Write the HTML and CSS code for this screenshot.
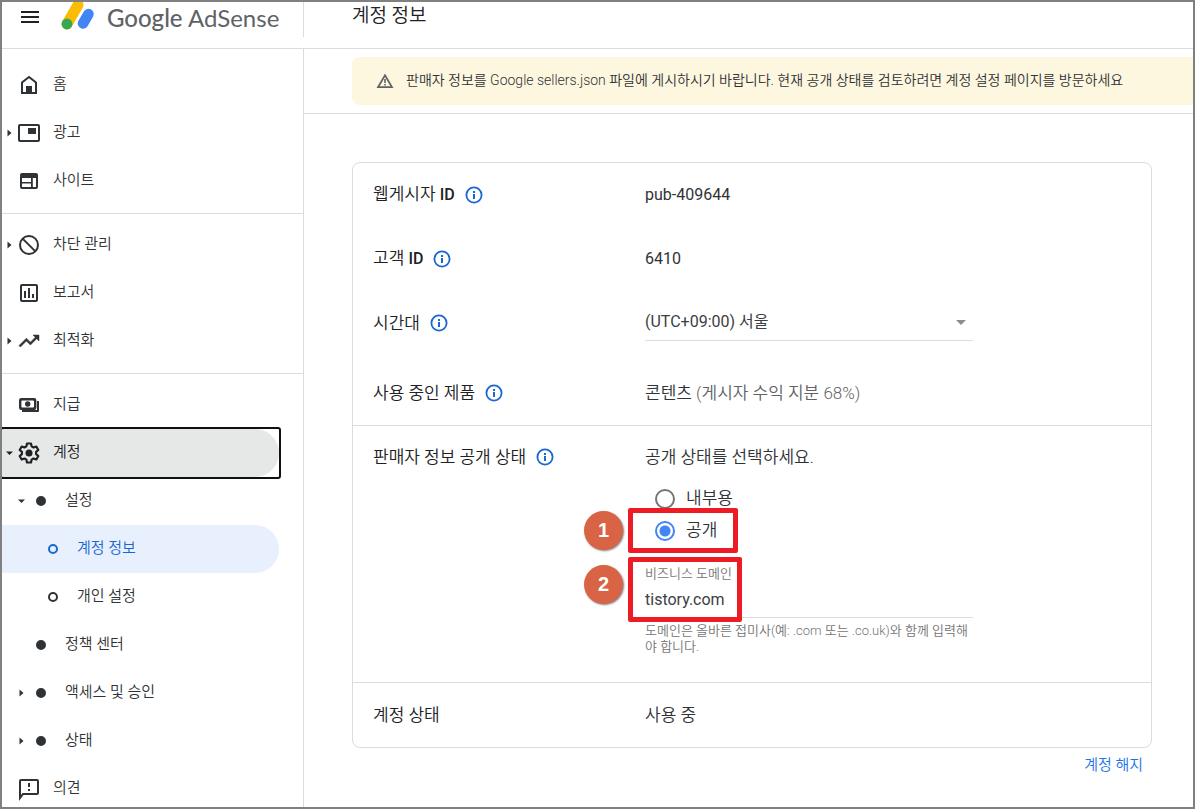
FILE: index.html
```html
<!DOCTYPE html>
<html lang="ko">
<head>
<meta charset="utf-8">
<meta name="viewport" content="width=device-width, initial-scale=1">
<title>Google AdSense - 계정 정보</title>
<link rel="stylesheet" href="styles.css">
</head>
<body>
<svg class="defs" aria-hidden="true">
  <symbol id="info" viewBox="0 0 18 18">
    <circle cx="9" cy="9" r="7.6" fill="none" stroke="currentColor" stroke-width="1.8"/>
    <path d="M8 8h2v5H8zM8 5h2v2H8z" fill="currentColor"/>
  </symbol>
  <symbol id="right" viewBox="0 0 8 8"><path d="M2 .5v7L6 4z" fill="currentColor"/></symbol>
  <symbol id="down" viewBox="0 0 8 8"><path d="M.5 2.5h7L4 6z" fill="currentColor"/></symbol>
</svg>
<div class="shell">
  <header class="topbar">
    <div class="brand">
      <button class="menu" type="button" aria-label="기본 메뉴">
        <svg width="24" height="24" viewBox="0 0 24 24"><path d="M3 6h18v2H3zM3 11h18v2H3zM3 16h18v2H3z" fill="#202124"/></svg>
      </button>
      <a class="logo" href="#">
        <svg class="mark" width="36" height="30" viewBox="0 0 36 30">
          <path d="M19 3L8 22" stroke="#fbbc04" stroke-width="11" stroke-linecap="round"/>
          <path d="M29.500 12L24 21.500" stroke="#4285f4" stroke-width="10.500" stroke-linecap="round"/>
          <circle cx="8" cy="22" r="5.400" fill="#34a853"/>
        </svg>
        <span class="wordmark"><span class="google">Google</span> AdSense</span>
      </a>
    </div>
    <h1 class="title">계정 정보</h1>
  </header>

  <div class="body">
    <nav class="sidebar" aria-label="탐색">
      <div class="group">
        <a class="item" href="#"><span class="caret"></span>
          <svg class="icon" viewBox="0 0 24 24"><path d="M5 20V9.500L12 4l7 5.500V20z" fill="none" stroke="currentColor" stroke-width="2"/><path d="M9 13h6v7H9z" fill="currentColor"/></svg><span>홈</span></a>
        <a class="item" href="#"><svg class="caret"><use href="#right"/></svg>
          <svg class="icon" viewBox="0 0 24 24"><rect x="2" y="4" width="20" height="16" rx="1" fill="none" stroke="currentColor" stroke-width="2"/><path d="M11 7h8v6h-8z" fill="currentColor"/></svg><span>광고</span></a>
        <a class="item" href="#"><span class="caret"></span>
          <svg class="icon" viewBox="0 0 24 24"><rect x="4" y="5" width="16" height="14" rx="1" fill="none" stroke="currentColor" stroke-width="2"/><path d="M4 5h16v4H4zM4 13h10v1.500H4zM14 9h1.800v10H14z" fill="currentColor"/></svg><span>사이트</span></a>
      </div>
      <div class="group">
        <a class="item" href="#"><svg class="caret"><use href="#right"/></svg>
          <svg class="icon" viewBox="0 0 24 24" fill="none" stroke="currentColor" stroke-width="2"><circle cx="12" cy="12" r="9"/><path d="M5.600 5.600l12.800 12.800"/></svg><span>차단 관리</span></a>
        <a class="item" href="#"><span class="caret"></span>
          <svg class="icon" viewBox="0 0 24 24"><rect x="4" y="4" width="16" height="16" rx="1" fill="none" stroke="currentColor" stroke-width="2"/><path d="M7 10h2v7H7zM11 7h2v10h-2zM15 13h2v4h-2z" fill="currentColor"/></svg><span>보고서</span></a>
        <a class="item" href="#"><svg class="caret"><use href="#right"/></svg>
          <svg class="icon" viewBox="0 0 24 24"><path d="M16 6l2.290 2.290-4.880 4.880-4-4L2 16.590 3.410 18l6-6 4 4 6.300-6.290L22 12V6z" fill="currentColor" stroke="currentColor" stroke-width=".5"/></svg><span>최적화</span></a>
      </div>
      <div class="group">
        <a class="item" href="#"><span class="caret"></span>
          <svg class="icon" viewBox="0 0 24 24"><rect x="3.200" y="6.200" width="15" height="9.600" rx="1" fill="none" stroke="currentColor" stroke-width="2.400"/><circle cx="10.700" cy="11" r="2.700" fill="currentColor"/><path d="M3 9l3-3H3zM18 9l-3-3h3zM3 13l3 3H3zM18 13l-3 3h3z" fill="currentColor"/><path d="M21 8v10H5" fill="none" stroke="currentColor" stroke-width="2" stroke-linejoin="round"/></svg><span>지급</span></a>
        <a class="item focused" href="#"><svg class="caret"><use href="#down"/></svg>
          <svg class="icon" viewBox="0 0 24 24"><path d="M10 3h4l.6 2.900 1.900 1.100 2.800-1 2 3.500-2.200 1.900v2.200l2.200 1.900-2 3.500-2.800-1-1.900 1.100L14 22h-4l-.6-2.900L7.500 18l-2.800 1-2-3.500 2.200-1.900v-2.200L2.700 9.500l2-3.500 2.800 1 1.900-1.100z" transform="translate(0 -.5)" fill="none" stroke="currentColor" stroke-width="2.200" stroke-linejoin="round"/><circle cx="12" cy="12" r="3.500" fill="currentColor"/></svg><span>계정</span></a>
        <a class="item sub" href="#"><svg class="caret"><use href="#down"/></svg><span class="dot"></span><span>설정</span></a>
        <a class="item leaf selected" href="#" aria-current="page"><span class="caret"></span><span class="dot ring"></span><span>계정 정보</span></a>
        <a class="item leaf" href="#"><span class="caret"></span><span class="dot ring"></span><span>개인 설정</span></a>
        <a class="item sub" href="#"><span class="caret"></span><span class="dot"></span><span>정책 센터</span></a>
        <a class="item sub" href="#"><svg class="caret"><use href="#right"/></svg><span class="dot"></span><span>액세스 및 승인</span></a>
        <a class="item sub" href="#"><svg class="caret"><use href="#right"/></svg><span class="dot"></span><span>상태</span></a>
        <a class="item" href="#"><span class="caret"></span>
          <svg class="icon" viewBox="0 0 24 24"><path d="M3 21V4q0-1 1-1h16q1 0 1 1v12q0 1-1 1H6z" fill="none" stroke="currentColor" stroke-width="2"/><path d="M11 6h2v4h-2zM11 12h2v2h-2z" fill="currentColor"/></svg><span>의견</span></a>
      </div>
    </nav>

    <main class="main">
      <div class="notice">
        <div class="banner" role="status">
          <svg width="18" height="18" viewBox="0 0 18 18"><path d="M9 3.200L16 15.200H2z" fill="none" stroke="#5f6368" stroke-width="1.700"/><path d="M8.200 7h1.600v4H8.200zM8.200 12h1.600v1.600H8.200z" fill="#5f6368"/></svg>
          <span>판매자 정보를 Google sellers.json 파일에 게시하시기 바랍니다. 현재 공개 상태를 검토하려면 계정 설정 페이지를 방문하세요</span>
        </div>
      </div>

      <div class="content">
        <div class="card">
          <section class="section">
            <div class="row">
              <div class="name"><span>웹게시자 <span class="latin">ID</span></span><button class="info" type="button" aria-label="웹게시자 ID 도움말"><svg><use href="#info"/></svg></button></div>
              <div class="latin">pub-409644</div>
            </div>
            <div class="row">
              <div class="name"><span>고객 <span class="latin">ID</span></span><button class="info" type="button" aria-label="고객 ID 도움말"><svg><use href="#info"/></svg></button></div>
              <div class="latin">6410</div>
            </div>
            <div class="row tall">
              <div class="name"><label for="tz">시간대</label><button class="info" type="button" aria-label="시간대 도움말"><svg><use href="#info"/></svg></button></div>
              <div class="select">
                <select id="tz"><option>(UTC+09:00) 서울</option></select>
                <svg class="arrow" width="10" height="5" viewBox="0 0 10 5"><path d="M0 0h10L5 5z" fill="#8a8d91"/></svg>
              </div>
            </div>
            <div class="row">
              <div class="name">사용 중인 제품<button class="info" type="button" aria-label="사용 중인 제품 도움말"><svg><use href="#info"/></svg></button></div>
              <div>콘텐츠 <span class="muted">(게시자 수익 지분 68%)</span></div>
            </div>
          </section>

          <section class="section">
            <div class="row disclosure">
              <div class="name">판매자 정보 공개 상태<button class="info" type="button" aria-label="판매자 정보 공개 상태 도움말"><svg><use href="#info"/></svg></button></div>
              <div class="field">
                <div class="prompt" id="prompt">공개 상태를 선택하세요.</div>
                <div class="radios" role="radiogroup" aria-labelledby="prompt">
                  <label class="radio"><input type="radio" name="visibility"><span>내부용</span></label>
                  <label class="radio"><input type="radio" name="visibility" checked><span>공개</span></label>
                </div>
                <div class="domain">
                  <label for="domain">비즈니스 도메인</label>
                  <input id="domain" type="text" value="tistory.com" aria-describedby="hint">
                  <p class="hint" id="hint">도메인은 올바른 접미사(예: .com 또는 .co.uk)와 함께 입력해야 합니다.</p>
                </div>
                <div class="mark-box first"></div>
                <div class="mark-box second"></div>
                <div class="step one">1</div>
                <div class="step two">2</div>
              </div>
            </div>
          </section>

          <section class="section">
            <div class="row">
              <div class="name">계정 상태</div>
              <div>사용 중</div>
            </div>
          </section>
        </div>
        <div class="actions"><a href="#">계정 해지</a></div>
      </div>
    </main>
  </div>
</div>
</body>
</html>
```
FILE: styles.css
```css
* { box-sizing: border-box; }

body {
  margin: 0;
  background: #fff;
  color: #303336;
  font: 350 17px/24px Roboto, "Noto Sans CJK KR", sans-serif;
}

.defs { display: none; }

button {
  padding: 0;
  border: 0;
  background: none;
  cursor: pointer;
}

a { color: inherit; text-decoration: none; }

.shell {
  display: flex;
  flex-direction: column;
  height: 100vh;
  border: 2px solid #808080;
  overflow: hidden;
}

/* Top bar */
.topbar {
  display: flex;
  align-items: flex-start;
  flex: none;
  height: 47px;
  border-bottom: 1px solid #dadce0;
}

.brand {
  display: flex;
  align-items: flex-start;
  width: 302px;
  height: 35px;
  padding-left: 16px;
  border-right: 1px solid #dadce0;
}

.menu { height: 24px; margin: 3px 17px 0 0; }

.menu svg, .mark { display: block; }

.logo { display: flex; color: #5f6368; }

.wordmark {
  margin-left: 12px;
  font: 400 24px/32px Lato, sans-serif;
  white-space: nowrap;
}

.google { font-weight: 500; }

.title {
  margin: 0 0 0 48px;
  color: #202124;
  font-size: 19px;
  font-weight: 350;
  line-height: 28px;
}

.body { display: flex; flex: 1; min-height: 0; }

/* Sidebar */
.sidebar {
  flex: none;
  width: 302px;
  border-right: 1px solid #dadce0;
  overflow: hidden;
}

.group { padding: 7px 24px 8px 0; border-top: 1px solid #dadce0; }

.group:first-child { padding-top: 12px; border-top: 0; }

.item {
  display: flex;
  align-items: center;
  height: 48px;
  border-radius: 0 24px 24px 0;
  font-size: 15px;
}

.item > :last-child { margin: 0 0 3px 12px; }

.sub { padding-left: 12px; }

.leaf { padding-left: 24px; }

.caret { width: 15px; height: 8px; flex: none; }

.icon { width: 24px; height: 24px; flex: none; }

.dot {
  flex: none;
  width: 10px;
  height: 10px;
  margin: 0 7px;
  border: 2px solid currentColor;
  border-radius: 50%;
  background: currentColor;
}

.ring { background: none; }

.focused {
  position: relative;
  background: #e6e8e7;
  color: #202124;
}

.focused::after {
  content: "";
  position: absolute;
  inset: -2px;
  border: 2px solid #101010;
  border-radius: 3px;
}

.selected { background: #e8f0fe; color: #1967d2; }

/* Main */
.main { flex: 1; min-width: 0; overflow: hidden; }

.notice { padding: 8px 0 8px 48px; border-bottom: 1px solid #dadce0; }

.banner {
  display: flex;
  align-items: center;
  gap: 12px;
  min-height: 48px;
  padding-left: 24px;
  border-radius: 8px 0 0 8px;
  background: #fef7e0;
  font-size: 14px;
  line-height: 20px;
}

.banner span { margin-bottom: 3px; }

.content { max-width: 848px; padding: 48px 0 0 48px; }

.card { border: 1px solid #dadce0; border-radius: 8px; }

.section + .section { border-top: 1px solid #dadce0; }

.row {
  display: grid;
  grid-template-columns: 272px 328px;
  align-items: center;
  min-height: 64px;
  padding: 0 0 1px 20px;
}

.tall { padding-bottom: 7px; min-height: 70px; }

.name {
  display: flex;
  align-items: center;
  gap: 10px;
  color: #202124;
}

.latin { font-size: 16px; font-weight: 400; }

.name .latin { font-weight: 500; }

.muted { color: #5f6368; }

.info { width: 18px; height: 18px; color: #1967d2; }

.info svg { display: block; width: 18px; height: 18px; }

.select { position: relative; }

.select select {
  display: block;
  width: 100%;
  height: 37px;
  padding: 0;
  border: 0;
  border-bottom: 1px solid #dadce0;
  border-radius: 0;
  appearance: none;
  background: none;
  color: #3c4043;
  font: 400 16px/24px Roboto, "Noto Sans CJK KR", sans-serif;
}

.arrow { position: absolute; right: 7px; top: 16px; pointer-events: none; }

.disclosure { align-items: start; padding-top: 19px; padding-bottom: 27px; }

.field { position: relative; }

.prompt { padding-bottom: 14px; }

.radios { padding-left: 10px; }

.radio { display: flex; align-items: center; gap: 11px; height: 32px; }

.radio span { margin-bottom: 2px; }

.radio input {
  width: 20px;
  height: 20px;
  margin: 0;
  border: 2px solid #757575;
  border-radius: 50%;
  appearance: none;
}

.radio input:checked {
  border-color: #4285f4;
  background: radial-gradient(circle, #4285f4 5px, transparent 6px);
}

.domain { padding-top: 17px; }

.domain label {
  display: block;
  color: #757575;
  font-size: 13px;
  line-height: 20px;
}

.domain input {
  display: block;
  width: 100%;
  height: 34px;
  padding: 0 0 3px;
  border: 0;
  border-bottom: 1px solid #dadce0;
  background: none;
  color: #3c4043;
  font: 400 16px/24px Roboto, sans-serif;
}

.hint {
  margin: 5px 0 0;
  color: #757575;
  font-size: 13px;
  line-height: 16px;
}

/* Tutorial callouts over the form */
.mark-box {
  position: absolute;
  left: -17px;
  border: 5px solid #ed1c24;
  border-radius: 2px;
  pointer-events: none;
}

.first { top: 63px; width: 110px; height: 45px; }

.second { top: 112px; width: 114px; height: 65px; }

.step {
  position: absolute;
  left: -61px;
  width: 39px;
  height: 39px;
  border-radius: 50%;
  background: #d96445;
  box-shadow: 1px 1px 2px rgba(0, 0, 0, .5);
  color: #fff;
  font: 700 20px/38px "Liberation Sans", Arial, sans-serif;
  text-align: center;
}

.one { top: 66px; }

.two { top: 120px; }

.actions {
  padding: 5px 9px 0 0;
  color: #1a73e8;
  font-size: 15px;
  text-align: right;
}
```
